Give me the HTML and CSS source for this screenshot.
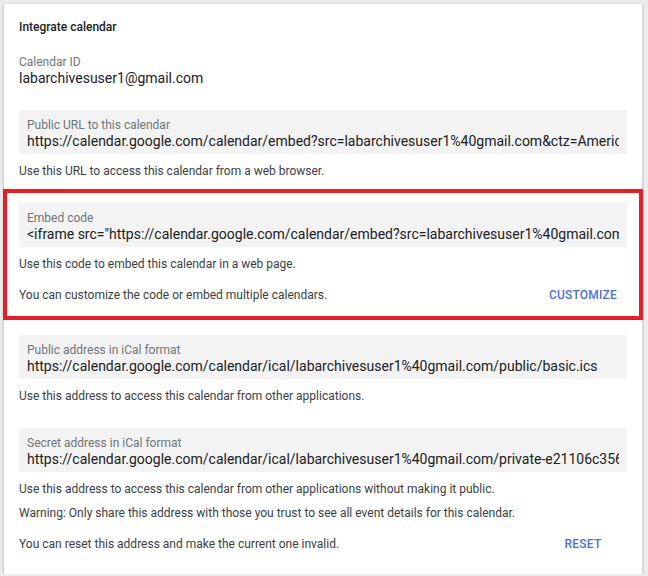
FILE: index.html
```html
<!DOCTYPE html>
<html lang="en">
<head>
    <meta charset="UTF-8">
    <meta name="viewport" content="width=device-width, initial-scale=1.0">
    <title>Integrate calendar</title>
    <link rel="stylesheet" href="styles.css">
</head>

<body>
    <div class="card">
        <h2 class="title">Integrate calendar</h2>

        <div class="section">
            <div class="label">Calendar ID</div>
            <div class="value">labarchivesuser1@gmail.com</div>
        </div>

        <div class="section">
            <div class="field">
                <div class="label">Public URL to this calendar</div>
                <div class="value">https://calendar.google.com/calendar/embed?src=labarchivesuser1%40gmail.com&amp;ctz=America%2FNew_York</div>
            </div>
            <p class="note">Use this URL to access this calendar from a web browser.</p>
        </div>

        <div class="section marked">
            <div class="field">
                <div class="label">Embed code</div>
                <div class="value">&lt;iframe src="https://calendar.google.com/calendar/embed?src=labarchivesuser1%40gmail.com&amp;ctz=America%2FNew_York" style="border: 0" width="800" height="600" frameborder="0" scrolling="no"&gt;&lt;/iframe&gt;</div>
            </div>
            <p class="note">Use this code to embed this calendar in a web page.</p>
            <div class="action">
                <p class="note">You can customize the code or embed multiple calendars.</p>
                <button class="btn">Customize</button>
            </div>
        </div>

        <div class="section">
            <div class="field">
                <div class="label">Public address in iCal format</div>
                <div class="value">https://calendar.google.com/calendar/ical/labarchivesuser1%40gmail.com/public/basic.ics</div>
            </div>
            <p class="note">Use this address to access this calendar from other applications.</p>
        </div>

        <div class="section">
            <div class="field">
                <div class="label">Secret address in iCal format</div>
                <div class="value">https://calendar.google.com/calendar/ical/labarchivesuser1%40gmail.com/private-e21106c356a2f0d9/basic.ics</div>
            </div>
            <p class="note">Use this address to access this calendar from other applications without making it public.</p>
            <p class="note">Warning: Only share this address with those you trust to see all event details for this calendar.</p>
            <div class="action">
                <p class="note">You can reset this address and make the current one invalid.</p>
                <button class="btn">Reset</button>
            </div>
        </div>
    </div>
</body>
</html>
```

FILE: styles.css
```css
body {
    margin: 0;
    padding: 0;
    background-color: #ececec;
    font-family: 'Roboto', 'Liberation Sans', sans-serif;
    color: #202124;
}
.card {
    width: 608px;
    margin: 4px 0 0 4px;
    padding: 15px 15px 14px;
    background-color: #ffffff;
    box-shadow: 0 1px 3px rgba(0, 0, 0, 0.3);
}
.title {
    margin: 0 0 19px;
    font-size: 12px;
    line-height: 16px;
    font-weight: 500;
    color: #202124;
}
.section + .section { margin-top: 24px; }
.label {
    font-size: 12px;
    line-height: 16px;
    color: #70757a;
}
.value {
    font-size: 14px;
    line-height: 16px;
    color: #202124;
    white-space: nowrap;
    overflow: hidden;
}
.field {
    padding: 7px 8px 5px;
    background-color: #f3f3f3;
}
.note {
    margin: 9px 0 0;
    font-size: 12px;
    line-height: 16px;
    color: #3c4043;
}
.note + .note { margin-top: 8px; }
.action {
    display: flex;
    align-items: center;
    justify-content: space-between;
    height: 32px;
    margin-top: 7px;
}
.action .note { margin: 0; }
.btn {
    min-width: 88px;
    height: 32px;
    padding: 0 8px;
    border: none;
    background: none;
    font-family: inherit;
    font-size: 12px;
    font-weight: 500;
    letter-spacing: 0.2px;
    text-transform: uppercase;
    color: #4c72d4;
    cursor: pointer;
}

/* red highlight drawn over the embed section */
.marked { position: relative; }
.marked::after {
    content: "";
    position: absolute;
    top: -14px;
    bottom: -9px;
    left: -16px;
    right: -16px;
    border: 4px solid #e41f27;
    pointer-events: none;
}
```
